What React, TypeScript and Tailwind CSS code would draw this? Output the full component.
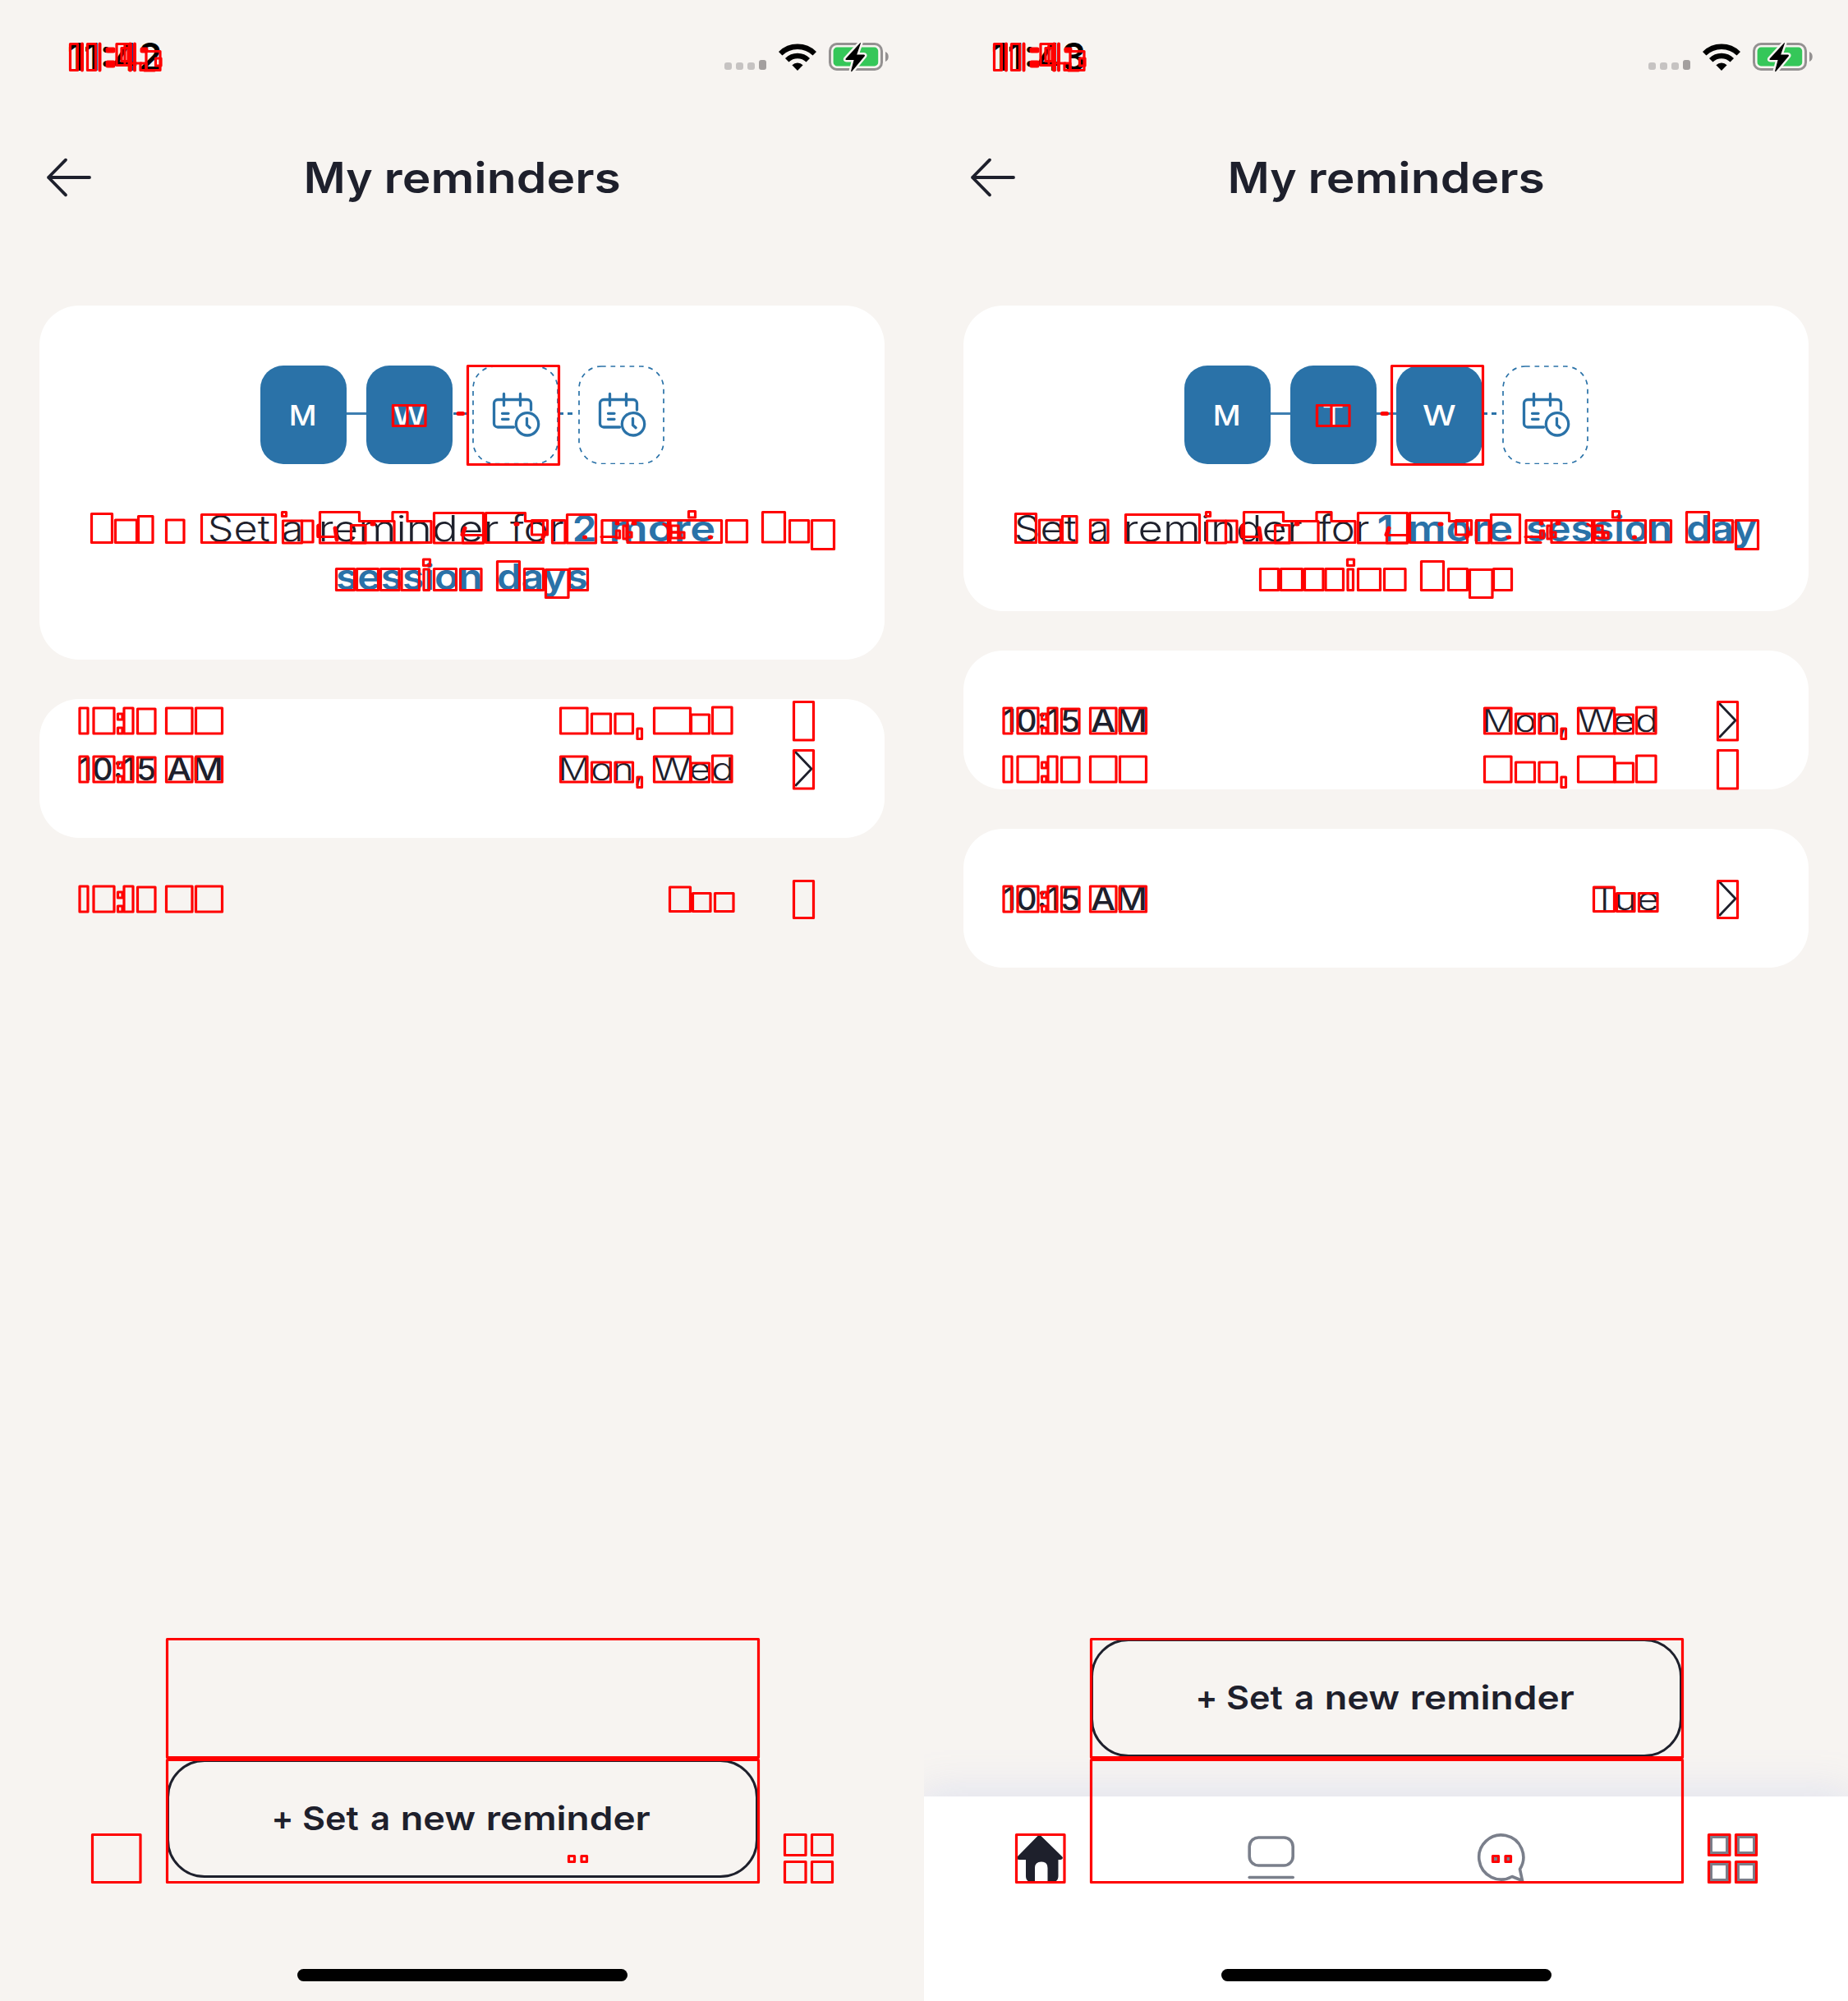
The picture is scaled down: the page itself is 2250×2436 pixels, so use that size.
import { useLayoutEffect, useRef } from "react";

type WordSpec = [text: string, left: number, right: number, tone?: string];

/** A word stretched so that its ink fills the given width exactly. */
function Word({ text, width, gap, tone = "" }: { text: string; width: number; gap: number; tone?: string }) {
  const ref = useRef<HTMLSpanElement>(null);
  useLayoutEffect(() => {
    const el = ref.current;
    const ctx = document.createElement("canvas").getContext("2d");
    if (!el || !ctx) return;
    const cs = getComputedStyle(el);
    ctx.font = `${cs.fontWeight} ${cs.fontSize} ${cs.fontFamily}`;
    const m = ctx.measureText(text);
    const s = (width + 1) / (m.actualBoundingBoxLeft + m.actualBoundingBoxRight);
    el.style.transform = `translateX(${m.actualBoundingBoxLeft * s - 1}px) scaleX(${s})`;
  }, [text, width]);
  return (
    <span className="block shrink-0" style={{ width, marginLeft: gap }}>
      <span ref={ref} className={`block w-max origin-left whitespace-pre ${tone}`}>
        {text}
      </span>
    </span>
  );
}

/** A line of words; coordinates are measured from the screen's left edge. */
function Line({ words, origin = 0, className = "" }: { words: WordSpec[]; origin?: number; className?: string }) {
  return (
    <div className={`flex ${className}`}>
      {words.map(([text, l, r, tone], i) => (
        <Word key={i} text={text} width={r - l} gap={l - (i ? words[i - 1][2] : origin)} tone={tone} />
      ))}
    </div>
  );
}

function StatusBar({ time }: { time: string }) {
  return (
    <div className="flex h-[138px] items-center text-black">
      <Line words={[[time, 85, 195]]} className="w-[882px] text-[46px] leading-[60px] font-semibold" />
      <div className="mt-[19px] flex items-end gap-[5px]">
        <i className="h-[9px] w-[9px] rounded-[3px] bg-[#c6c3c2]" />
        <i className="h-[9px] w-[9px] rounded-[3px] bg-[#c6c3c2]" />
        <i className="h-[9px] w-[9px] rounded-[3px] bg-[#c6c3c2]" />
        <i className="h-[12px] w-[9px] rounded-[3px] bg-[#a39f9e]" />
      </div>
      <svg className="ml-[15px] h-[33px] w-[46px]" viewBox="0 0 46 33">
        <g fill="none" stroke="#000" strokeWidth="6.4">
          <path d="M2.2 12.2a29.8 29.8 0 0 1 41.6 0" />
          <path d="M10.2 20.2a18.4 18.4 0 0 1 25.6 0" />
        </g>
        <path d="M23 33l-6.6-6.8a9.6 9.6 0 0 1 13.2 0z" />
      </svg>
      <svg className="ml-[14px] h-[38px] w-[76px]" viewBox="0 0 76 38">
        <rect x="2.5" y="3.5" width="63" height="31" rx="8.5" fill="none" stroke="#949191" strokeWidth="3" />
        <rect x="6.6" y="7.6" width="54.6" height="22.8" rx="4.5" fill="#35c759" />
        <path d="M70 13c5 1.5 5 10.500 0 12z" fill="#949191" />
        <path
          d="M39.500 2L21.600 21.500q-.8 1.500 1 1.500h9L28.200 36c-.2 1.500.6 1.500 1.200.8L44.800 18.200q.8-1.700-1-1.700h-8.600L40 2.600z"
          fill="#000"
          stroke="#f7f4f1"
          strokeWidth="5"
          paintOrder="stroke"
          strokeLinejoin="round"
        />
      </svg>
    </div>
  );
}

function CalendarTile() {
  return (
    <svg className="h-[120px] w-[105px] shrink-0" viewBox="0 0 105 120" fill="none" stroke="#2a72a8">
      <rect x="1" y="1" width="103" height="118.500" rx="27" strokeWidth="1.700" strokeDasharray="5.700 5.800" />
      <g strokeWidth="3.300" strokeLinecap="round" strokeLinejoin="round">
        <path d="M50.500 75H31a4.500 4.500 0 0 1-4.500-4.500V46a4.500 4.500 0 0 1 4.500-4.500h36a4.500 4.500 0 0 1 4.500 4.500v8" />
        <path d="M38.500 34.500v14M58.500 34.500v14M36.500 58.300h7.500M36.500 65.300h7.500" />
        <circle cx="67" cy="71.300" r="13.700" />
        <path d="M66.500 64.500v8l3.600 3.200" />
      </g>
    </svg>
  );
}

function DayTile({ letter, w }: { letter: string; w: number }) {
  return (
    <div className="flex h-[120px] w-[105px] shrink-0 items-center justify-center rounded-[28px] bg-[#2a72a8] pt-px text-[34.500px] leading-[44px] font-[530] text-white">
      <Word text={letter} width={w} gap={0} />
    </div>
  );
}

function Solid() {
  return <div className="mt-[-3px] h-[3.500px] w-6 shrink-0 bg-[#3d7eb0]" />;
}

function Dashes() {
  return (
    <div className="mt-[-3px] flex h-[3.500px] w-6 shrink-0 gap-[5px] pl-px">
      <i className="w-[5px] bg-[#2a72a8]" />
      <i className="w-[6px] bg-[#2a72a8]" />
    </div>
  );
}

function Reminder({ time, days }: { time: WordSpec[]; days: WordSpec[] }) {
  return (
    <div className="mt-12 flex h-[169px] items-center rounded-[48px] bg-white text-[37.500px] leading-[48px]">
      <Line words={time} origin={48} className="mt-[2px] w-[540px] font-[530]" />
      <Line words={days} origin={588} className="mt-[2px] w-[379px] font-[360]" />
      <svg className="mt-px h-[44px] w-[26px]" viewBox="0 0 26 44" fill="none" stroke="#1e202c" strokeWidth="2.800" strokeLinecap="round" strokeLinejoin="round">
        <path d="M2 2l19 20L2 42" />
      </svg>
    </div>
  );
}

const blue = "font-[580] text-[#2a72a8]";
const time: WordSpec[] = [["10:15", 98, 189], ["AM", 204, 269.500]];
const monWed: WordSpec[] = [["Mon,", 684, 781], ["Wed", 798, 891]];
const tue: WordSpec[] = [["Tue", 816, 893]];

type Box = [x1: number, y1: number, x2: number, y2: number];

const rowBoxes: Box[] = [
  [97, 862, 107, 893], [114, 862, 139, 893], [143.500, 869, 149, 876], [143.500, 886, 149, 893], [151, 862, 162, 893],
  [167.500, 863, 189, 893], [202.500, 862, 234, 893], [238.500, 862, 270.500, 893],
];
const monWedBoxes: Box[] = [
  [682.500, 862, 715, 893], [720.500, 869, 743.500, 893], [749, 869, 770.500, 893], [776, 887, 781.500, 899.500],
  [796.500, 862, 840.500, 893], [841.500, 870, 863.500, 893], [867.500, 861, 891, 893], [966.500, 854.500, 990.500, 901],
];
const shift = (boxes: Box[], dy: number): Box[] => boxes.map(([a, b, c, d]) => [a, b + dy, c, d + dy]);

const boxes: Box[] = [
  [85.500, 53.500, 94.500, 85.500], [106.500, 53.500, 116.500, 85.500],
  [142, 53.500, 157, 79.500], [148, 58.500, 156, 74.500], [171, 77, 178, 85.500], [178, 62.500, 195, 85.500], [189.500, 71, 196, 80],
  [478.500, 493.500, 518, 518.500], [478.500, 493.500, 496, 518.500], [569.500, 445.500, 680.500, 565.500],
  [111.500, 625.500, 136.500, 660.500], [140.500, 633, 166.500, 660.500], [168.500, 628.500, 186, 660.500], [202.500, 633, 224, 660.500],
  [245.500, 626.500, 335.500, 660.500], [343.500, 623.500, 348.500, 628.500], [344.500, 634, 367.500, 661], [367.500, 634, 381, 660],
  [427.500, 639.500, 445, 661], [528.500, 624.500, 588.500, 661], [563.500, 651.500, 588.500, 661],
  [647.500, 633.500, 666.500, 651], [672.500, 633.500, 688, 661], [690.500, 626.500, 725.500, 661],
  [750.500, 646, 754.500, 655], [759, 640, 763, 656], [764, 648, 769, 654], [817, 640, 826, 648], [817, 648, 826, 655], [828, 648, 833, 655],
  [838.500, 622.500, 846.500, 630], [884.500, 633.500, 909.500, 660], [928.500, 623.500, 955.500, 660],
  [961.500, 633.500, 984.500, 660], [988.500, 633.500, 1015.500, 668.500],
  [409.500, 692.500, 431.500, 718.500], [434.500, 692.500, 460.500, 718.500], [463.500, 692.500, 486, 718.500], [489, 692.500, 510.500, 718.500],
  [515.500, 681, 523.500, 688.500], [516, 693, 522.500, 718.500], [528.500, 692.500, 555.500, 718.500], [560.500, 692.500, 586, 718.500],
  [605.500, 683.500, 632.500, 718.500], [638.500, 692.500, 661.500, 718.500], [664.500, 693.500, 692, 727.500], [693.500, 692.500, 715.500, 718.500],
  ...rowBoxes, ...monWedBoxes, ...shift(rowBoxes, 59), ...shift(monWedBoxes, 59), ...shift(rowBoxes, 217),
  [815.500, 1080, 840.500, 1109.500], [843.500, 1087.500, 865, 1109.500], [870.500, 1087.500, 893, 1109.500], [966.500, 1072.500, 990.500, 1117.500],
  [203.500, 1995.500, 923.500, 2139.500], [203.500, 2142.500, 923.500, 2291.500],
  [112.500, 2233.500, 171, 2291.500], [692.500, 2259.500, 699.500, 2266.500], [708, 2259.500, 714.500, 2266.500],
  [955.500, 2233.500, 981, 2258.500], [988.500, 2233.500, 1013.500, 2258.500], [955.500, 2266.500, 981, 2291.500], [988.500, 2266.500, 1013.500, 2291.500],
];

/** Highlights the regions that differ between the two screens. */
function DiffOverlay() {
  return (
    <svg className="pointer-events-none absolute inset-0 h-full w-full" viewBox="0 0 1125 2436" fill="none" stroke="#f00" strokeWidth="3.200" strokeLinejoin="round" strokeLinecap="round">
      {boxes.map(([x1, y1, x2, y2], i) => (
        <rect key={i} x={x1} y={y1} width={x2 - x1} height={y2 - y1} />
      ))}
      <path d="M389.500 661V623.500H437.500V634.500H478V623.500H496V634.500H525V660.500ZM480 634.500V660M387 653.500H406M387 640V653" />
      <path d="M591.500 624.500H639.500V634.500H661.500V660.500H591.500Z" />
      <path d="M733 633.500H878.500V660.500H816V634M733 633.500V660.500H751M732 653.500H751M764 660.500H813.500V634M764 634V660.500M808 638L814 642" />
      <path d="M158 77H172M176 86h12M152 54V77" />
      <path d="M100 53.500V85.500M121.500 53.500V85.500M164 53.500V85.500" strokeWidth="4" />
      <path d="M158.500 54V85M131 60h7M131 60v2h7M131 76h7M131 80h7M131 78h7M173 60h5M173 62h5M558 503.500h5.500" strokeWidth="5" />
      <path d="M388 640v12M408 643l2 14M566 643l-3 8M453 638h2M628 638h2M663 648l-2 6M711.500 654h1M751 637h1M771 637h2M864.500 654h1" strokeWidth="5" />
    </svg>
  );
}

function TabBar() {
  return (
    <div className="flex h-[249px] bg-white pt-[44px] pl-[112px] shadow-[0_0_48px_4px_rgba(147,169,233,0.24)]">
      <svg className="h-[64px] w-[60px]" viewBox="0 0 60 64">
        <path d="M27.500 4q2-1.600 4 0L57 29c2 2 .5 4-2 4H52.500v20q0 7-7 7h-6V43q0-7.500-7.700-7.500T24 43v17h-4q-7 0-7-7V33H5c-3 0-4-2-2-4z" transform="translate(-1 0)" fill="#1e202c" />
      </svg>
      <svg className="ml-[220px] h-[64px] w-[62px]" viewBox="0 0 62 64" fill="none" stroke="#7a7f8b" strokeWidth="3.600" strokeLinecap="round">
        <rect x="4.200" y="6" width="53" height="34" rx="11" />
        <path d="M4.200 54.500h53" />
      </svg>
      <svg className="ml-[216px] h-[64px] w-[66px]" viewBox="0 0 66 64" fill="none" stroke="#7a7f8b" strokeWidth="3.600" strokeLinejoin="round">
        <path d="M46 53.500A27 27 0 1 1 55.500 44.500L58.500 58.500Z" />
        <path d="M26.500 32h.1M41 32h.1" strokeLinecap="round" strokeWidth="5.500" />
      </svg>
      <svg className="ml-[217px] h-[64px] w-[64px]" viewBox="0 0 64 64" fill="none" stroke="#7a7f8b" strokeWidth="4">
        <rect x="5" y="5" width="20" height="20" rx="1" />
        <rect x="38" y="5" width="20" height="20" rx="1" />
        <rect x="5" y="38" width="20" height="20" rx="1" />
        <rect x="38" y="38" width="20" height="20" rx="1" />
      </svg>
    </div>
  );
}

function Screen({ second }: { second: boolean }) {
  return (
    <section className="relative flex h-[2436px] w-[1125px] flex-col overflow-hidden bg-[#f7f4f1] text-[#1e202c]">
      <StatusBar time={second ? "11:43" : "11:42"} />
      <header className="flex h-[156px] items-center pl-[55px]">
        <svg className="h-[50px] w-[60px]" viewBox="0 0 60 50" fill="none" stroke="#1e202c" strokeWidth="3.800" strokeLinecap="round" strokeLinejoin="round">
          <path d="M54 25H4M25 3.700L4 25l21 21.300" />
        </svg>
        <Line words={[["My", 374, 453], ["reminders", 472, 754]]} origin={115} className="mt-[2px] text-[52px] leading-[60px] font-[560]" />
      </header>
      <main className="flex flex-1 flex-col px-12 pt-[78px]">
        <div className="rounded-[48px] bg-white pt-[73px] pb-[71px]">
          <div className="flex items-center justify-center">
            <DayTile letter="M" w={28} />
            <Solid />
            {second ? <DayTile letter="T" w={22.500} /> : <DayTile letter="W" w={39} />}
            {second ? <Solid /> : <Dashes />}
            {second ? <DayTile letter="W" w={39} /> : <CalendarTile />}
            <Dashes />
            <CalendarTile />
          </div>
          <div className="mt-[49px] text-[44px] leading-[59px] font-[340]">
            {second ? (
              <Line
                origin={48}
                words={[
                  ["Set", 112.500, 185], ["a", 204, 222], ["reminder", 247, 460], ["for", 480.500, 541],
                  ["1", 555, 569, blue], ["more", 592, 716, blue], ["session", 735, 908, blue], ["day", 930, 1014, blue],
                ]}
              />
            ) : (
              <>
                <Line
                  origin={48}
                  words={[
                    ["Set", 256, 328.500], ["a", 346, 366], ["reminder", 391.500, 606], ["for", 622, 686],
                    ["2", 700, 724, blue], ["more", 745, 870, blue],
                  ]}
                />
                <Line origin={48} words={[["session", 411, 584.500, blue], ["days", 606.500, 714, blue]]} />
              </>
            )}
          </div>
        </div>
        <Reminder time={time} days={monWed} />
        {second && <Reminder time={time} days={tue} />}
        <button
          className={`mt-auto ml-[155px] flex h-[144px] w-[720px] items-center rounded-[46px] border-[3px] border-[#1e202c] text-[40px] leading-[50px] font-[560] ${second ? "mb-[48px]" : "mb-[150px]"}`}
        >
          <Line
            origin={206}
            words={[["+", 334.500, 354.500], ["Set", 369.500, 436], ["a", 452.500, 472.500], ["new", 490.500, 578], ["reminder", 594.500, 791.500]]}
          />
        </button>
      </main>
      {second && <TabBar />}
      <div className="absolute bottom-[24px] left-[362px] h-[15px] w-[402px] rounded-full bg-black" />
      <DiffOverlay />
    </section>
  );
}

export default function App() {
  return (
    <div className="flex h-[2436px] w-[2250px] overflow-hidden font-['Inter',sans-serif]">
      <Screen second={false} />
      <Screen second />
    </div>
  );
}
